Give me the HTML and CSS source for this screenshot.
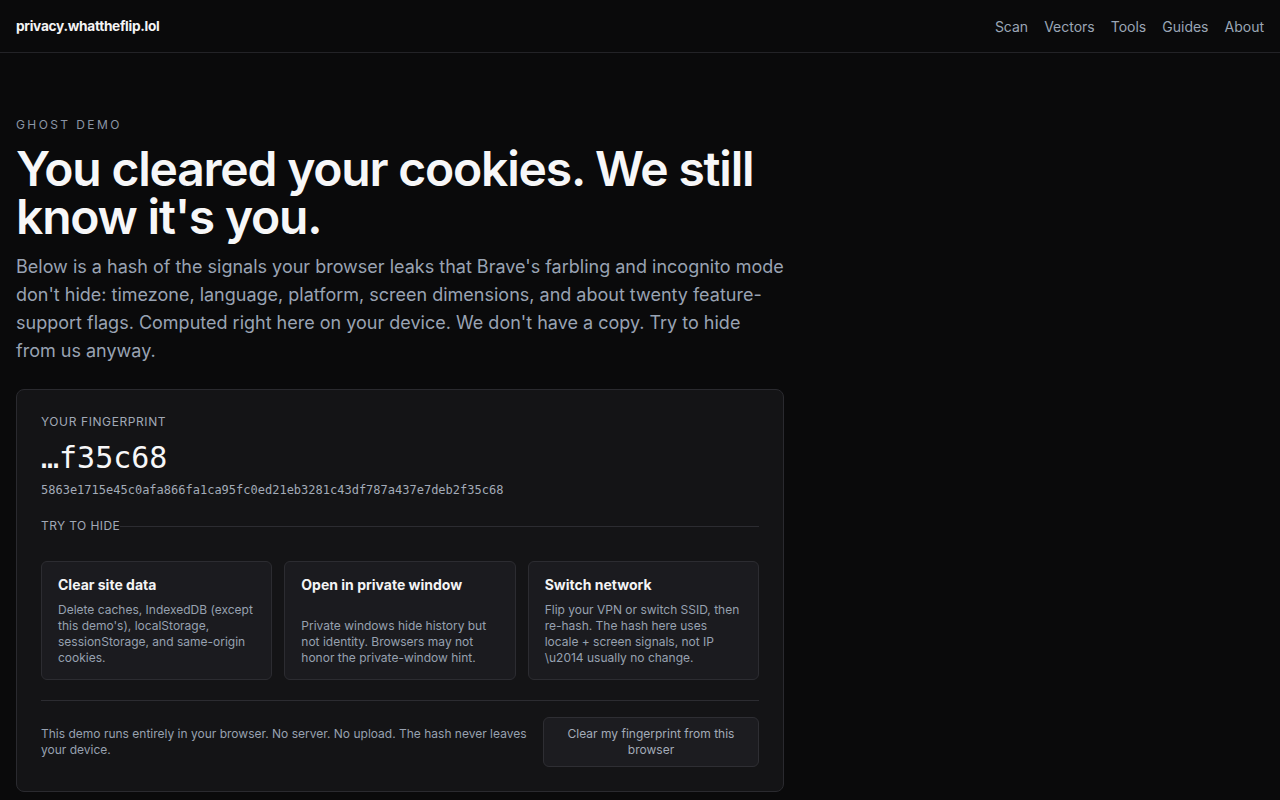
FILE: index.html
```html
<!DOCTYPE html>
<html lang="en-US">
    <head>
        <title>Ghost demo · privacy.whattheflip.lol</title>
        <meta charset="utf-8">
        <meta name="viewport" content="width=device-width, initial-scale=1.0">
        <link rel="stylesheet" href="styles.css">
    </head>

    <body>
        <header class="topbar">
            <a class="brand" href="#">privacy.whattheflip.lol</a>
            <nav class="nav">
                <a href="#">Scan</a>
                <a href="#">Vectors</a>
                <a href="#">Tools</a>
                <a href="#">Guides</a>
                <a href="#">About</a>
            </nav>
        </header>

        <main class="page">
            <p class="eyebrow">Ghost demo</p>
            <h1>You cleared your cookies. We still know it's you.</h1>
            <p class="lede">Below is a hash of the signals your browser leaks that Brave's farbling and incognito mode don't hide: timezone, language, platform, screen dimensions, and about twenty feature-support flags. Computed right here on your device. We don't have a copy. Try to hide from us anyway.</p>

            <section class="panel">
                <p class="label">Your fingerprint</p>
                <p class="hash-short">…f35c68</p>
                <p class="hash-full">5863e1715e45c0afa866fa1ca95fc0ed21eb3281c43df787a437e7deb2f35c68</p>

                <div class="rule-title"><span>Try to hide</span></div>

                <div class="tries">
                    <div class="try">
                        <h3>Clear site data</h3>
                        <p>Delete caches, IndexedDB (except this demo's), localStorage, sessionStorage, and same-origin cookies.</p>
                    </div>
                    <div class="try">
                        <h3>Open in private window</h3>
                        <p>Private windows hide history but not identity. Browsers may not honor the private-window hint.</p>
                    </div>
                    <div class="try">
                        <h3>Switch network</h3>
                        <p>Flip your VPN or switch SSID, then re-hash. The hash here uses locale + screen signals, not IP \u2014 usually no change.</p>
                    </div>
                </div>

                <div class="panel-foot">
                    <p>This demo runs entirely in your browser. No server. No upload. The hash never leaves your device.</p>
                    <button class="clear-btn">Clear my fingerprint from this browser</button>
                </div>
            </section>
        </main>
    </body>
</html>
```

FILE: styles.css
```css
* {
    box-sizing: border-box;
    margin: 0;
}
body {
    background-color: #0a0a0b;
    color: #f4f4f5;
    font-family: Inter, "Noto Sans", sans-serif;
}
a {
    text-decoration: none;
    color: inherit;
}

/* top bar */
.topbar {
    height: 53px;
    display: flex;
    align-items: center;
    justify-content: space-between;
    padding: 0 16px;
    border-bottom: 1px solid #232327;
}
.brand {
    font-size: 13.7px;
    font-weight: 700;
    color: #f4f4f5;
    letter-spacing: -0.3px;
}
.nav {
    display: flex;
    gap: 16px;
    font-size: 14px;
    color: #9ba6b6;
}

/* hero */
.page {
    max-width: 800px;
    padding: 64px 16px 40px;
}
.eyebrow {
    font-size: 12px;
    letter-spacing: 2.4px;
    text-transform: uppercase;
    color: #8b95a5;
    line-height: 16px;
}
h1 {
    margin-top: 12px;
    font-size: 48px;
    line-height: 48px;
    font-weight: 600;
    letter-spacing: -1.2px;
    color: #f7f7f8;
}
.lede {
    margin-top: 12px;
    font-size: 18px;
    line-height: 28px;
    color: #99a3b3;
}

/* fingerprint panel */
.panel {
    margin-top: 24px;
    background-color: #141416;
    border: 1px solid #2a2a2f;
    border-radius: 8px;
    padding: 24px 24px 24px;
}
.label {
    font-size: 12px;
    line-height: 16px;
    letter-spacing: 0.6px;
    text-transform: uppercase;
    color: #a1a9b6;
}
.hash-short {
    margin-top: 10px;
    font-family: "DejaVu Sans Mono", monospace;
    font-size: 30px;
    line-height: 36px;
    color: #f7f7f8;
}
.hash-full {
    margin-top: 6px;
    font-family: "DejaVu Sans Mono", monospace;
    font-size: 12px;
    line-height: 16px;
    color: #a3abb8;
}
.rule-title {
    margin-top: 20px;
    display: flex;
    align-items: center;
    font-size: 12px;
    line-height: 16px;
    letter-spacing: 0.4px;
    text-transform: uppercase;
    color: #a1a9b6;
}
.rule-title::after {
    content: "";
    flex: 1;
    height: 1px;
    background-color: #2c2c31;
}

.tries {
    margin-top: 27px;
    display: grid;
    grid-template-columns: repeat(3, 1fr);
    gap: 12px;
}
.try {
    display: flex;
    flex-direction: column;
    justify-content: space-between;
    min-height: 119px;
    padding: 14px 16px 13px;
    background-color: #1b1b1f;
    border: 1px solid #2c2c31;
    border-radius: 6px;
}
.try h3 {
    font-size: 14px;
    line-height: 18px;
    font-weight: 700;
    color: #f4f4f5;
}
.try p {
    margin-top: 8px;
    font-size: 12px;
    line-height: 16px;
    color: #97a1b0;
}

.panel-foot {
    margin-top: 20px;
    padding-top: 16px;
    border-top: 1px solid #2c2c31;
    display: flex;
    align-items: center;
    gap: 16px;
}
.panel-foot p {
    flex: 1;
    font-size: 12px;
    line-height: 16px;
    color: #97a1b0;
}
.clear-btn {
    width: 216px;
    height: 50px;
    padding: 0 16px;
    background-color: #1c1c20;
    border: 1px solid #2e2e33;
    border-radius: 6px;
    font-family: Inter, "Noto Sans", sans-serif;
    font-size: 12px;
    line-height: 16px;
    color: #a3abb8;
}
```
